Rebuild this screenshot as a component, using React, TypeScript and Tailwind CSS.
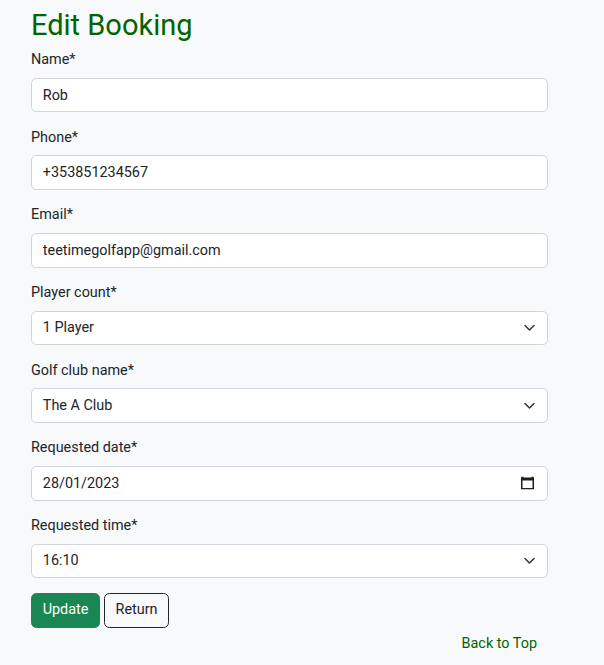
import React from "react";

const inputCls =
  "block w-full h-[34.5px] px-[10.8px] text-[14.4px] leading-[21.6px] text-[#212529] bg-white border border-[#ced4da] rounded-[5.4px] outline-none appearance-none";

const Chevron = () => (
  <svg
    className="pointer-events-none absolute right-[13px] top-1/2 -translate-y-1/2"
    width="11"
    height="7"
    viewBox="0 0 11 7"
    fill="none"
  >
    <path d="M1 1l4.5 4.5L10 1" stroke="#343a40" strokeWidth="1.6" strokeLinecap="round" strokeLinejoin="round" />
  </svg>
);

const CalendarIcon = () => (
  <svg
    className="pointer-events-none absolute right-[14px] top-1/2 -translate-y-1/2"
    width="13"
    height="13"
    viewBox="0 0 13 13"
    fill="none"
  >
    <rect x="0.5" y="0" width="2" height="2" fill="#1f1f1f" />
    <rect x="10.5" y="0" width="2" height="2" fill="#1f1f1f" />
    <rect x="0.75" y="1.75" width="11.5" height="10.5" stroke="#1f1f1f" strokeWidth="1.5" />
    <rect x="0.5" y="1.5" width="12" height="2.5" fill="#1f1f1f" />
  </svg>
);

interface FieldProps {
  label: string;
  children: React.ReactNode;
}

const Field: React.FC<FieldProps> = ({ label, children }) => (
  <div className="mb-[14.4px]">
    <label className="block mb-[7.2px] text-[14.4px] leading-[21.6px] text-[#212529]">{label}</label>
    {children}
  </div>
);

export default function App() {
  return (
    <div
      className="min-h-[665px] bg-[#f8f9fa] text-[#212529]"
      style={{ fontFamily: "Roboto, 'Liberation Sans', sans-serif" }}
    >
      <div className="w-[517px] ml-[31px] pt-[7px]">
        <h1 className="text-[29px] leading-[36px] text-[#006400] mb-[6px]">Edit Booking</h1>
        <form onSubmit={(e) => e.preventDefault()}>
          <Field label="Name*">
            <input className={inputCls} defaultValue="Rob" />
          </Field>
          <Field label="Phone*">
            <input className={inputCls} defaultValue="+353851234567" />
          </Field>
          <Field label="Email*">
            <input className={inputCls} defaultValue="teetimegolfapp@gmail.com" />
          </Field>
          <Field label="Player count*">
            <div className="relative">
              <select className={inputCls} defaultValue="1">
                <option value="1">1 Player</option>
                <option value="2">2 Players</option>
                <option value="3">3 Players</option>
                <option value="4">4 Players</option>
              </select>
              <Chevron />
            </div>
          </Field>
          <Field label="Golf club name*">
            <div className="relative">
              <select className={inputCls} defaultValue="a">
                <option value="a">The A Club</option>
              </select>
              <Chevron />
            </div>
          </Field>
          <Field label="Requested date*">
            <div className="relative">
              <input className={inputCls} defaultValue="28/01/2023" readOnly />
              <CalendarIcon />
            </div>
          </Field>
          <Field label="Requested time*">
            <div className="relative">
              <select className={inputCls} defaultValue="16:10">
                <option value="16:10">16:10</option>
              </select>
              <Chevron />
            </div>
          </Field>
          <div className="flex gap-[4px]">
            <button
              type="submit"
              className="h-[35px] w-[69px] rounded-[5.4px] bg-[#198754] text-white text-[14.4px] border border-[#198754]"
            >
              Update
            </button>
            <button
              type="button"
              className="h-[35px] w-[65px] rounded-[5.4px] border border-[#212529] text-[#212529] text-[14.4px] bg-transparent"
            >
              Return
            </button>
          </div>
        </form>
        <div className="flex justify-end pr-[11px] mt-[5px]">
          <a href="#" className="text-[14.4px] leading-[21.6px] text-[#006400]">
            Back to Top
          </a>
        </div>
      </div>
    </div>
  );
}
